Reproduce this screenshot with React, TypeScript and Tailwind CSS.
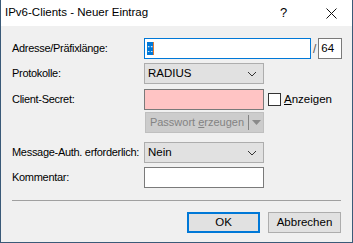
import React from "react";

const font = { fontFamily: '"Liberation Sans", Arial, sans-serif' };

function Chevron() {
  return (
    <svg className="h-[6px] w-[10px]" viewBox="0 0 10 6" fill="none">
      <path d="M1 1l4 4 4-4" stroke="#333" strokeWidth="1" />
    </svg>
  );
}

function Select({ value }: { value: string }) {
  return (
    <div className="flex h-[21px] w-[120px] items-center justify-between border border-[#adadad] bg-[#e1e1e1] pl-[3px] pr-[6px] text-[11.5px] text-black">
      <span>{value}</span>
      <Chevron />
    </div>
  );
}

function Label({ children }: { children: React.ReactNode }) {
  return (
    <div className="w-[132px] shrink-0 whitespace-nowrap text-[11px] tracking-[-0.3px] text-black">
      {children}
    </div>
  );
}

export default function App() {
  return (
    <div
      className="flex h-[243px] w-[353px] flex-col whitespace-nowrap border-x border-b border-[#3a5a78] bg-[#f0f0f0]"
      style={font}
    >
      <div className="flex h-[26px] shrink-0 items-center bg-white pl-[4px] text-[11.5px] text-black">
        <span className="flex-1">IPv6-Clients - Neuer Eintrag</span>
        <span className="w-[12px] text-[13px]">?</span>
        <span className="ml-[32px] mr-[14px] flex w-[14px] items-center justify-center">
          <svg className="h-[11px] w-[11px]" viewBox="0 0 11 11" fill="none">
            <path d="M0.5 0.5l10 10M10.5 0.5l-10 10" stroke="#111" strokeWidth="1" />
          </svg>
        </span>
      </div>

      <div className="flex flex-col pl-[11px] pt-[12px]">
        <div className="flex h-[21px] items-center">
          <Label>Adresse/Präfixlänge:</Label>
          <div className="flex h-[21px] w-[167px] items-center border border-[#0078d7] bg-white pl-[2px]">
            <span className="flex h-[13px] w-[6px] items-center justify-center bg-[#0078d7] text-[11px] leading-none text-white">
              ::
            </span>
            <span className="h-[13px] w-px bg-[#e07a30]" />
          </div>
          <span className="mx-[2px] text-[12px] text-[#555]">/</span>
          <div className="flex h-[21px] w-[24px] items-center border border-[#7a7a7a] bg-white pl-[2px] text-[11.5px]">
            64
          </div>
        </div>

        <div className="mt-[4px] flex h-[21px] items-center">
          <Label>Protokolle:</Label>
          <Select value="RADIUS" />
        </div>

        <div className="mt-[5px] flex h-[21px] items-center">
          <Label>Client-Secret:</Label>
          <div className="h-[21px] w-[120px] border border-[#7a7a7a] bg-[#ffc4c4]" />
          <div className="ml-[4px] h-[13px] w-[13px] border border-[#333] bg-white" />
          <span className="ml-[3px] text-[11.5px]">
            <span className="underline">A</span>nzeigen
          </span>
        </div>

        <div className="mt-[2px] flex h-[21px] items-center">
          <div className="w-[133px] shrink-0" />
          <div className="flex h-[21px] w-[119px] items-center border border-[#bfbfbf] bg-[#cccccc] text-[11px] text-[#838383]">
            <span className="flex-1 text-center">
              Passwort <span className="underline">e</span>rzeugen
            </span>
            <span className="h-[15px] w-px bg-[#838383]" />
            <span className="flex w-[14px] justify-center">
              <svg className="h-[5px] w-[9px]" viewBox="0 0 9 5">
                <path d="M0 0h9L4.5 5z" fill="#8a8a8a" />
              </svg>
            </span>
          </div>
        </div>

        <div className="mt-[9px] flex h-[21px] items-center">
          <Label>Message-Auth. erforderlich:</Label>
          <Select value="Nein" />
        </div>

        <div className="mt-[4px] flex h-[21px] items-center">
          <Label>Kommentar:</Label>
          <div className="h-[21px] w-[120px] border border-[#7a7a7a] bg-white" />
        </div>

        <div className="mr-[11px] mt-[12px] h-px bg-[#a0a0a0]" />

        <div className="mr-[11px] mt-[11px] flex justify-end gap-[8px]">
          <button className="h-[21px] w-[73px] border-2 border-[#0078d7] bg-[#e1e1e1] text-[11.5px] text-black">
            OK
          </button>
          <button className="h-[21px] w-[73px] border border-[#adadad] bg-[#e1e1e1] text-[11.5px] text-black">
            Abbrechen
          </button>
        </div>
      </div>
    </div>
  );
}
